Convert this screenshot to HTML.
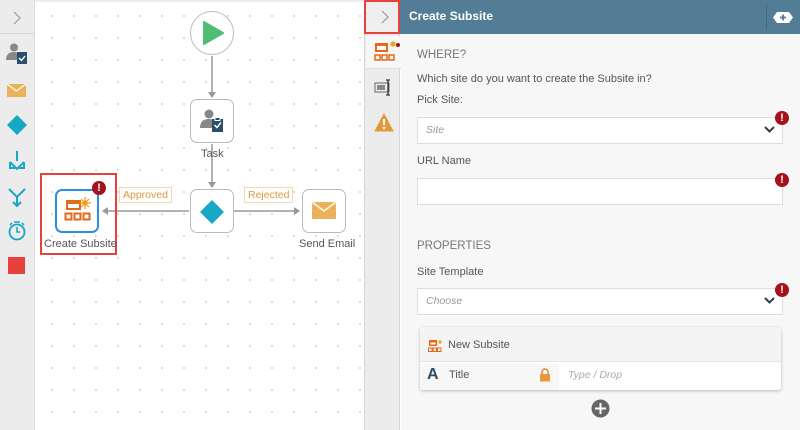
<!DOCTYPE html>
<html><head><style>
*{margin:0;padding:0;box-sizing:border-box}
body{width:800px;height:430px;overflow:hidden;font-family:"Liberation Sans",sans-serif;background:#fff;position:relative;font-size:11px;color:#444}
.a{position:absolute}
.dots{background-image:radial-gradient(circle,#d6d6d6 0.8px,transparent 1.2px);background-size:22px 22px;background-position:5px 5px}
.node{position:absolute;width:44px;height:44px;border:1px solid #bbb;border-radius:7px;background:#fff}
.lbl{position:absolute;font-size:11px;color:#555}
.tag{position:absolute;border:1px solid #f3d9b0;color:#d99a3d;font-size:10.5px;padding:1px 3px;background:#fff}
.err{position:absolute;width:14px;height:14px;border-radius:50%;background:#a5121c;color:#fff;font-weight:bold;font-size:11px;text-align:center;line-height:14px}
.inp{position:absolute;left:417px;width:366px;height:27px;background:#fff;border:1px solid #ddd}
.t{position:absolute;font-size:11px;color:#555}
</style></head><body>
<div class="a" style="left:0;top:0;width:35px;height:430px;background:#ececec;border-right:1px solid #ddd"></div>
<div class="a" style="left:0;top:0;width:35px;height:34px;border-bottom:1px solid #d6d6d6"></div>
<svg class="a" style="left:12px;top:11px" width="10" height="14"><path d="M2 1l6 6-6 6" stroke="#999" fill="none" stroke-width="1.2"/></svg>
<svg class="a" style="left:5px;top:42px" width="24" height="24"><circle cx="9" cy="5.5" r="4" fill="#888"/><path d="M1 18q0-8 8-8q4 0 5 3v5z" fill="#888"/><rect x="12" y="10" width="10" height="12" fill="#2b4f6a"/><path d="M14 16l2.5 2.5 3.5-4.5" stroke="#fff" fill="none" stroke-width="1.4"/></svg>
<svg class="a" style="left:7px;top:84px" width="20" height="14"><rect width="19" height="13" fill="#eab25a"/><path d="M0 0l9.5 7 9.5-7" stroke="#fff" fill="none" stroke-width="1.2"/></svg>
<svg class="a" style="left:6px;top:114px" width="22" height="22"><path d="M11 1l10 10-10 10-10-10z" fill="#17a8c4"/></svg>
<svg class="a" style="left:7px;top:150px" width="20" height="20"><path d="M10 1v10M3 12l7 7 7-7M3 12v6h5M17 12v6h-5" stroke="#17a8c4" fill="none" stroke-width="2"/></svg>
<svg class="a" style="left:7px;top:187px" width="20" height="20"><path d="M2 2l8 8 8-8M10 10v9M6 15l4 4 4-4" stroke="#17a8c4" fill="none" stroke-width="2"/></svg>
<svg class="a" style="left:7px;top:220px" width="20" height="22"><circle cx="10" cy="12" r="7.5" stroke="#17a8c4" fill="none" stroke-width="1.8"/><path d="M10 7v5h3M7 2h6M3 5l2-2M17 5l-2-2" stroke="#17a8c4" fill="none" stroke-width="1.6"/></svg>
<div class="a" style="left:8px;top:257px;width:17px;height:17px;background:#e8403a"></div>
<div class="a dots" style="left:36px;top:0;width:328px;height:430px"></div>
<div class="a" style="left:35px;top:0;width:329px;height:3px;background:linear-gradient(#e4e4e4,#fff)"></div>
<div class="a" style="left:190px;top:11px;width:44px;height:44px;border:1px solid #bbb;border-radius:50%;background:#fff"></div>
<svg class="a" style="left:202px;top:21px" width="22" height="24"><path d="M2 1l19 11-19 11z" fill="#4fbe74" stroke="#4fbe74" stroke-linejoin="round" stroke-width="2"/></svg>
<svg class="a" style="left:0;top:0" width="364" height="430">
<g stroke="#999" stroke-width="1.5">
<line x1="212" y1="56" x2="212" y2="92"/>
<line x1="212" y1="144" x2="212" y2="182"/>
<line x1="189" y1="211" x2="108" y2="211"/>
<line x1="234" y1="211" x2="294" y2="211"/></g>
<g fill="#999"><path d="M208 92h8l-4 6z"/><path d="M208 182h8l-4 6z"/><path d="M108 207v8l-6-4z"/><path d="M294 207v8l6-4z"/></g></svg>
<div class="node" style="left:190px;top:99px"></div>
<svg class="a" style="left:199px;top:108px" width="26" height="26"><circle cx="10" cy="6" r="4.5" fill="#888"/><path d="M1 20q0-9 9-9q5 0 6 4v5z" fill="#888"/><rect x="13" y="11" width="11" height="13" fill="#2b4f6a"/><rect x="16" y="9.5" width="5" height="3" fill="#2b4f6a" stroke="#fff"/><path d="M15.5 17l2.5 2.5 4-5" stroke="#fff" fill="none" stroke-width="1.5"/></svg>
<div class="lbl" style="left:201px;top:148px">Task</div>
<div class="node" style="left:190px;top:189px"></div>
<svg class="a" style="left:199px;top:199px" width="26" height="26"><path d="M13 1l12 12-12 12-12-12z" fill="#17a8c4"/></svg>
<div class="node" style="left:302px;top:189px"></div>
<svg class="a" style="left:312px;top:202px" width="24" height="18"><rect width="24" height="17" fill="#eab25a"/><path d="M0 0l12 9 12-9" stroke="#fff" fill="none" stroke-width="1.4"/></svg>
<div class="lbl" style="left:299px;top:238px">Send Email</div>
<div class="tag" style="left:119px;top:187px">Approved</div>
<div class="tag" style="left:244px;top:187px">Rejected</div>
<div class="a" style="left:40px;top:173px;width:77px;height:82px;border:2px solid #e8403a"></div>
<div class="node" style="left:55px;top:189px;border:2px solid #2a8fe0"></div>
<svg class="a" style="left:64px;top:197px" width="28" height="28"><rect x="2" y="3" width="15" height="10" fill="#e46a1a"/><rect x="4" y="7" width="11" height="4" fill="#fff"/><circle cx="21" cy="6" r="2.5" fill="#f39c12"/><path d="M21 0v12M15 6h12M17 2l8 8M25 2l-8 8" stroke="#f39c12" stroke-width="1.2"/><rect x="1.5" y="16.5" width="6" height="6" fill="none" stroke="#e46a1a" stroke-width="2"/><rect x="10.5" y="16.5" width="6" height="6" fill="none" stroke="#e46a1a" stroke-width="2"/><rect x="19.5" y="16.5" width="6" height="6" fill="none" stroke="#e46a1a" stroke-width="2"/></svg>
<div class="err" style="left:92px;top:181px">!</div>
<div class="lbl" style="left:44px;top:238px">Create Subsite</div>
<div class="a" style="left:364px;top:0;width:36px;height:430px;background:#ececec;border-left:1px solid #d6d6d6;border-right:1px solid #d6d6d6"></div>
<div class="a" style="left:364px;top:0;width:36px;height:34px;background:#eee;border:2px solid #e8403a"></div>
<svg class="a" style="left:380px;top:10px" width="10" height="14"><path d="M2 1l6 6-6 6" stroke="#999" fill="none" stroke-width="1.2"/></svg>
<div class="a" style="left:366px;top:36px;width:35px;height:33px;background:#f7f7f7;border-bottom:1px solid #ddd"></div>
<svg class="a" style="left:374px;top:41px" width="26" height="22"><rect x="1" y="2" width="13" height="9" fill="#e46a1a"/><rect x="3" y="5" width="9" height="4" fill="#fff"/><path d="M16 3h6M19 0v6M17 1l4 4M21 1l-4 4" stroke="#f39c12" stroke-width="1.2"/><circle cx="24" cy="4" r="2" fill="#a5121c"/><rect x="1" y="14" width="5" height="5" fill="none" stroke="#e46a1a" stroke-width="1.5"/><rect x="8" y="14" width="5" height="5" fill="none" stroke="#e46a1a" stroke-width="1.5"/><rect x="15" y="14" width="5" height="5" fill="none" stroke="#e46a1a" stroke-width="1.5"/></svg>
<svg class="a" style="left:374px;top:79px" width="20" height="18"><rect x="1" y="4" width="14" height="9" fill="none" stroke="#666"/><rect x="3" y="6" width="8" height="5" fill="#888"/><path d="M12 1h4M14 1v15M12 16h4" stroke="#333" stroke-width="1.3"/></svg>
<svg class="a" style="left:374px;top:113px" width="20" height="19"><path d="M10 1l9 17H1z" fill="#e49a3a" stroke="#e49a3a" stroke-linejoin="round"/><path d="M10 6v6" stroke="#fff" stroke-width="2"/><circle cx="10" cy="15" r="1.2" fill="#fff"/></svg>
<div class="a" style="left:400px;top:0;width:400px;height:34px;background:#537d96"></div>
<div class="a" style="left:409px;top:9px;color:#fff;font-weight:bold;font-size:12px">Create Subsite</div>
<div class="a" style="left:766px;top:4px;width:1px;height:26px;background:#46697f"></div>
<svg class="a" style="left:773px;top:12px" width="20" height="11"><path d="M4 0h12l4 5.5-4 5.5H4L0 5.5z" fill="#fff"/><path d="M10 2.5v6M7 5.5h6" stroke="#537d96" stroke-width="1.8"/></svg>
<div class="a" style="left:401px;top:34px;width:399px;height:396px;background:#f7f7f7"></div>
<div class="t" style="left:417px;top:49px;color:#777;font-size:11.5px">WHERE?</div>
<div class="t" style="left:417px;top:73px">Which site do you want to create the Subsite in?</div>
<div class="t" style="left:417px;top:94px">Pick Site:</div>
<div class="inp" style="top:117px"></div>
<div class="t" style="left:426px;top:124px;color:#999;font-style:italic;font-size:10.5px">Site</div>
<svg class="a" style="left:764px;top:126px" width="11" height="8"><path d="M1 1l4.5 4.5L10 1" stroke="#2b3e50" fill="none" stroke-width="2"/></svg>
<div class="err" style="left:775px;top:111px">!</div>
<div class="t" style="left:417px;top:155px">URL Name</div>
<div class="inp" style="top:178px"></div>
<div class="err" style="left:775px;top:173px">!</div>
<div class="t" style="left:417px;top:240px;color:#777;font-size:11.5px">PROPERTIES</div>
<div class="t" style="left:417px;top:266px">Site Template</div>
<div class="inp" style="top:288px"></div>
<div class="t" style="left:426px;top:295px;color:#999;font-style:italic;font-size:10.5px">Choose</div>
<svg class="a" style="left:764px;top:297px" width="11" height="8"><path d="M1 1l4.5 4.5L10 1" stroke="#2b3e50" fill="none" stroke-width="2"/></svg>
<div class="err" style="left:775px;top:283px">!</div>
<div class="a" style="left:420px;top:327px;width:361px;height:63px;background:#fff;border-radius:3px;box-shadow:0 1px 3px rgba(0,0,0,.25)"></div>
<div class="a" style="left:420px;top:327px;width:361px;height:35px;background:#f4f4f4;border-bottom:1px solid #e4e4e4;border-radius:3px 3px 0 0"></div>
<svg class="a" style="left:428px;top:339px" width="14" height="14"><rect x="1" y="1" width="8" height="6" fill="#e46a1a"/><rect x="2.5" y="3.5" width="5" height="2" fill="#fff"/><path d="M10 3h4M12 1v4" stroke="#f39c12" stroke-width="1.3"/><rect x="0.5" y="9" width="3.5" height="3.5" fill="none" stroke="#e46a1a"/><rect x="5" y="9" width="3.5" height="3.5" fill="none" stroke="#e46a1a"/><rect x="9.5" y="9" width="3.5" height="3.5" fill="none" stroke="#e46a1a"/></svg>
<div class="t" style="left:448px;top:339px">New Subsite</div>
<div class="a" style="left:420px;top:363px;width:139px;height:27px;background:#f7f7f7"></div>
<div class="a" style="left:427px;top:366px;font-weight:bold;font-size:16px;color:#2b4f6a">A</div>
<div class="t" style="left:449px;top:369px">Title</div>
<svg class="a" style="left:539px;top:368px" width="12" height="14"><path d="M3 6V4a3 3 0 0 1 6 0v2" stroke="#d48a2a" fill="none" stroke-width="1.4"/><rect x="1" y="6" width="10" height="7.5" fill="#e49a3a"/></svg>
<div class="t" style="left:568px;top:369px;color:#aaa;font-style:italic;font-size:10.5px">Type / Drop</div>
<svg class="a" style="left:591px;top:399px" width="19" height="19"><circle cx="9.5" cy="9.5" r="9" fill="#666"/><path d="M9.5 4v11M4 9.5h11" stroke="#fff" stroke-width="2"/></svg>
</body></html>
